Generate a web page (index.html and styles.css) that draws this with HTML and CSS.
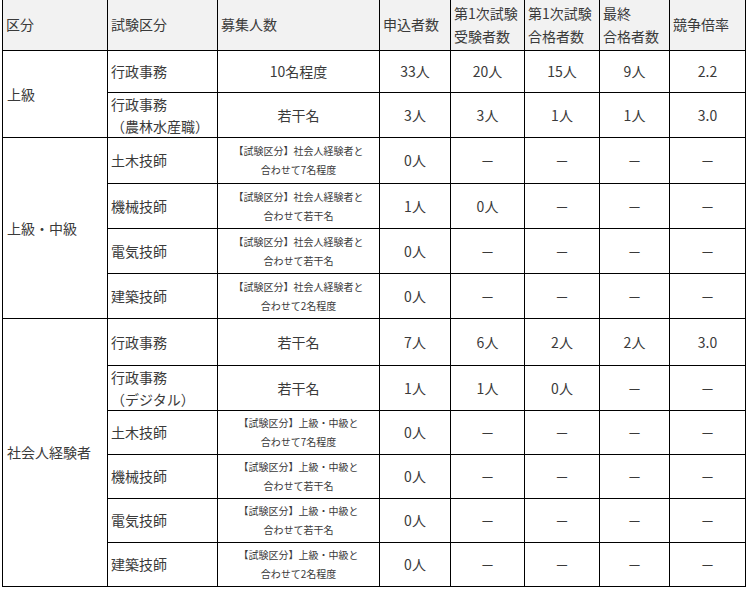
FILE: index.html
```html
<!DOCTYPE html>
<html lang="ja">
<head>
<meta charset="utf-8">
<link rel="stylesheet" href="styles.css">
</head>
<body>
<div class="wrap">
<table class="tbl">
  <colgroup>
    <col class="c1"><col class="c2"><col class="c3"><col class="c4"><col class="c5"><col class="c6"><col class="c7"><col class="c8">
  </colgroup>
  <thead>
    <tr class="hrow">
      <th>区分</th>
      <th>試験区分</th>
      <th>募集人数</th>
      <th>申込者数</th>
      <th>第1次試験<br>受験者数</th>
      <th>第1次試験<br>合格者数</th>
      <th>最終<br>合格者数</th>
      <th>競争倍率</th>
    </tr>
  </thead>
  <tbody>
    <tr class="r42">
      <td class="grp" rowspan="2">上級</td>
      <td class="kind">行政事務</td>
      <td class="num">10名程度</td>
      <td class="num">33人</td><td class="num">20人</td><td class="num">15人</td><td class="num">9人</td><td class="num">2.2</td>
    </tr>
    <tr class="r45">
      <td class="kind">行政事務<br>（農林水産職）</td>
      <td class="num">若干名</td>
      <td class="num">3人</td><td class="num">3人</td><td class="num">1人</td><td class="num">1人</td><td class="num">3.0</td>
    </tr>
    <tr class="r46">
      <td class="grp" rowspan="4">上級・中級</td>
      <td class="kind">土木技師</td>
      <td class="note">【試験区分】社会人経験者と<br>合わせて7名程度</td>
      <td class="num">0人</td><td class="num">－</td><td class="num">－</td><td class="num">－</td><td class="num">－</td>
    </tr>
    <tr class="r45">
      <td class="kind">機械技師</td>
      <td class="note">【試験区分】社会人経験者と<br>合わせて若干名</td>
      <td class="num">1人</td><td class="num">0人</td><td class="num">－</td><td class="num">－</td><td class="num">－</td>
    </tr>
    <tr class="r45">
      <td class="kind">電気技師</td>
      <td class="note">【試験区分】社会人経験者と<br>合わせて若干名</td>
      <td class="num">0人</td><td class="num">－</td><td class="num">－</td><td class="num">－</td><td class="num">－</td>
    </tr>
    <tr class="r45">
      <td class="kind">建築技師</td>
      <td class="note">【試験区分】社会人経験者と<br>合わせて2名程度</td>
      <td class="num">0人</td><td class="num">－</td><td class="num">－</td><td class="num">－</td><td class="num">－</td>
    </tr>
    <tr class="r47">
      <td class="grp" rowspan="6">社会人経験者</td>
      <td class="kind">行政事務</td>
      <td class="num">若干名</td>
      <td class="num">7人</td><td class="num">6人</td><td class="num">2人</td><td class="num">2人</td><td class="num">3.0</td>
    </tr>
    <tr class="r44">
      <td class="kind">行政事務<br>（デジタル）</td>
      <td class="num">若干名</td>
      <td class="num">1人</td><td class="num">1人</td><td class="num">0人</td><td class="num">－</td><td class="num">－</td>
    </tr>
    <tr class="r44">
      <td class="kind">土木技師</td>
      <td class="note">【試験区分】上級・中級と<br>合わせて7名程度</td>
      <td class="num">0人</td><td class="num">－</td><td class="num">－</td><td class="num">－</td><td class="num">－</td>
    </tr>
    <tr class="r44">
      <td class="kind">機械技師</td>
      <td class="note">【試験区分】上級・中級と<br>合わせて若干名</td>
      <td class="num">0人</td><td class="num">－</td><td class="num">－</td><td class="num">－</td><td class="num">－</td>
    </tr>
    <tr class="r44">
      <td class="kind">電気技師</td>
      <td class="note">【試験区分】上級・中級と<br>合わせて若干名</td>
      <td class="num">0人</td><td class="num">－</td><td class="num">－</td><td class="num">－</td><td class="num">－</td>
    </tr>
    <tr class="r44">
      <td class="kind">建築技師</td>
      <td class="note">【試験区分】上級・中級と<br>合わせて2名程度</td>
      <td class="num">0人</td><td class="num">－</td><td class="num">－</td><td class="num">－</td><td class="num">－</td>
    </tr>
  </tbody>
</table>
</div>
</body>
</html>
```
FILE: styles.css
```css
html, body {
  margin: 0;
  padding: 0;
  background: #fff;
}
.wrap {
  padding-left: 2px;
}
.tbl {
  border-collapse: collapse;
  table-layout: fixed;
  width: 743px;
  font-family: "Noto Sans CJK JP", "Noto Sans", sans-serif;
  font-size: 14px;
  line-height: 22px;
  color: #3a3a3a;
}
.c1 { width: 105px; }
.c2 { width: 110px; }
.c3 { width: 162px; }
.c4 { width: 71px; }
.c5 { width: 74px; }
.c6 { width: 75px; }
.c7 { width: 70px; }
.c8 { width: 76px; }
.tbl th, .tbl td {
  border: 1px solid #000;
  padding: 0 3px;
  vertical-align: middle;
  overflow: hidden;
  white-space: nowrap;
  box-sizing: border-box;
}
.tbl th {
  border-top: none;
  background: #f2f2f2;
  font-weight: normal;
  text-align: left;
  height: 50px;
  line-height: 23px;
}
.tbl td.grp { text-align: left; padding-left: 4px; }
.tbl td.kind { text-align: left; }
.tbl td.num { text-align: center; }
.tbl td.note {
  text-align: center;
  font-size: 10px;
  line-height: 19px;
}
.r42 td { height: 42px; }
.r44 td { height: 44px; }
.r45 td { height: 45px; }
.r46 td { height: 46px; }
.r47 td { height: 47px; }
```
